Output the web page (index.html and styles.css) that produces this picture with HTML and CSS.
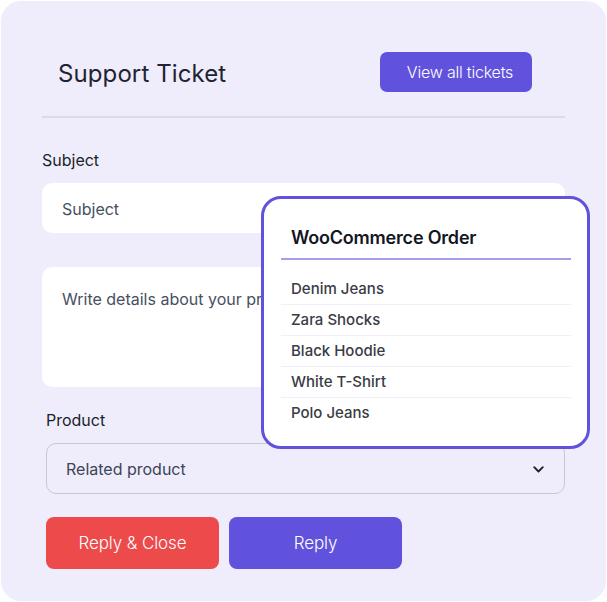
FILE: index.html
```html
<!DOCTYPE html>
<html lang="en">
<head>
<meta charset="utf-8">
<title>Support Ticket</title>
<link rel="stylesheet" href="styles.css">
</head>
<body>
<div class="card">
  <header class="head">
    <h1 class="title">Support Ticket</h1>
    <button class="btn btn-primary btn-sm">View all tickets</button>
  </header>
  <hr class="divider">
  <label class="label">Subject</label>
  <div class="field input">Subject</div>
  <div class="field textarea">Write details about your problem</div>
  <label class="label label-shift">Product</label>
  <div class="select">
    <span>Related product</span>
    <svg class="chev" width="11" height="7" viewBox="0 0 11 7"><path d="M1.2 1.2l4.3 4.3 4.3-4.3" fill="none" stroke="#1b1e2b" stroke-width="1.8" stroke-linecap="round" stroke-linejoin="round"/></svg>
  </div>
  <div class="actions">
    <button class="btn btn-danger">Reply &amp; Close</button>
    <button class="btn btn-primary">Reply</button>
  </div>

  <div class="popup">
    <div class="popup-title">WooCommerce Order</div>
    <ul class="popup-list">
      <li>Denim Jeans</li>
      <li>Zara Shocks</li>
      <li>Black Hoodie</li>
      <li>White T-Shirt</li>
      <li>Polo Jeans</li>
    </ul>
  </div>
</div>
</body>
</html>
```

FILE: styles.css
```css
* { box-sizing: border-box; }

html, body {
  margin: 0;
  padding: 0;
  background: #ffffff;
}

body {
  font-family: Inter, "Noto Sans", "Liberation Sans", sans-serif;
  color: #1e2433;
}

.card {
  position: relative;
  width: 605px;
  height: 600px;
  margin: 1px 0 0 1px;
  padding: 51px 41px 0 41px;
  background: #efedfb;
  border-radius: 20px;
}

.head {
  display: flex;
  justify-content: space-between;
  align-items: center;
  height: 40px;
  padding: 0 33px 0 16px;
}

.title {
  margin: 0;
  padding-top: 4px;
  font-size: 24px;
  line-height: 30px;
  font-weight: 400;
  color: #1e2433;
  letter-spacing: 0.1px;
}

.btn {
  display: flex;
  align-items: center;
  justify-content: center;
  border: none;
  font-family: inherit;
  color: #ffffff;
  font-weight: 300;
  cursor: pointer;
}

.btn-primary { background: #6052dc; }
.btn-danger { background: #ec4a4b; }

.btn-sm {
  width: 152px;
  height: 40px;
  border-radius: 7px;
  padding: 0 0 0 8px;
  font-size: 16px;
  line-height: 20px;
  letter-spacing: -0.2px;
}

.divider {
  margin: 24px 0 0;
  height: 2px;
  border: none;
  background: #dcdae8;
}

.label {
  display: block;
  margin-top: 32px;
  font-size: 16px;
  line-height: 20px;
  color: #1b1f2c;
}

.label-shift {
  margin-top: 23px;
  margin-left: 4px;
}

.field {
  background: #ffffff;
  border-radius: 10px;
  font-size: 16px;
  line-height: 20px;
  color: #465062;
  padding: 0 20px;
}

.input {
  margin-top: 13px;
  height: 50px;
  padding-top: 16px;
}

.textarea {
  margin-top: 34px;
  height: 120px;
  padding-top: 22px;
}

.select {
  margin: 13px 0 0 4px;
  height: 51px;
  border: 1px solid #c9c7d6;
  border-radius: 10px;
  display: flex;
  align-items: center;
  justify-content: space-between;
  padding: 0 20px 0 19px;
  font-size: 16px;
  line-height: 20px;
  color: #3d4456;
}

.chev { display: block; margin-top: 1px; }

.actions {
  display: flex;
  gap: 10px;
  margin: 23px 0 0 4px;
}

.actions .btn {
  width: 173px;
  height: 52px;
  border-radius: 8px;
  padding-left: 6px;
  font-size: 17px;
  line-height: 20px;
  letter-spacing: -0.1px;
}

.popup {
  position: absolute;
  left: 260px;
  top: 195px;
  width: 329px;
  height: 253px;
  background: #ffffff;
  border: 3px solid #6052dc;
  border-radius: 20px;
  padding: 28px 16px 0 17px;
}

.popup-title {
  padding: 0 0 9px 10px;
  border-bottom: 2px solid #a59ee9;
  font-size: 18px;
  line-height: 22px;
  font-weight: 600;
  color: #14161f;
  letter-spacing: -0.2px;
}

.popup-list {
  list-style: none;
  margin: 14px 0 0;
  padding: 0;
}

.popup-list li {
  padding: 6px 10px 6px;
  font-size: 15px;
  line-height: 18px;
  font-weight: 500;
  color: #3a3b45;
  border-bottom: 1px solid #f0eefa;
}

.popup-list li:last-child { border-bottom: none; }
```
